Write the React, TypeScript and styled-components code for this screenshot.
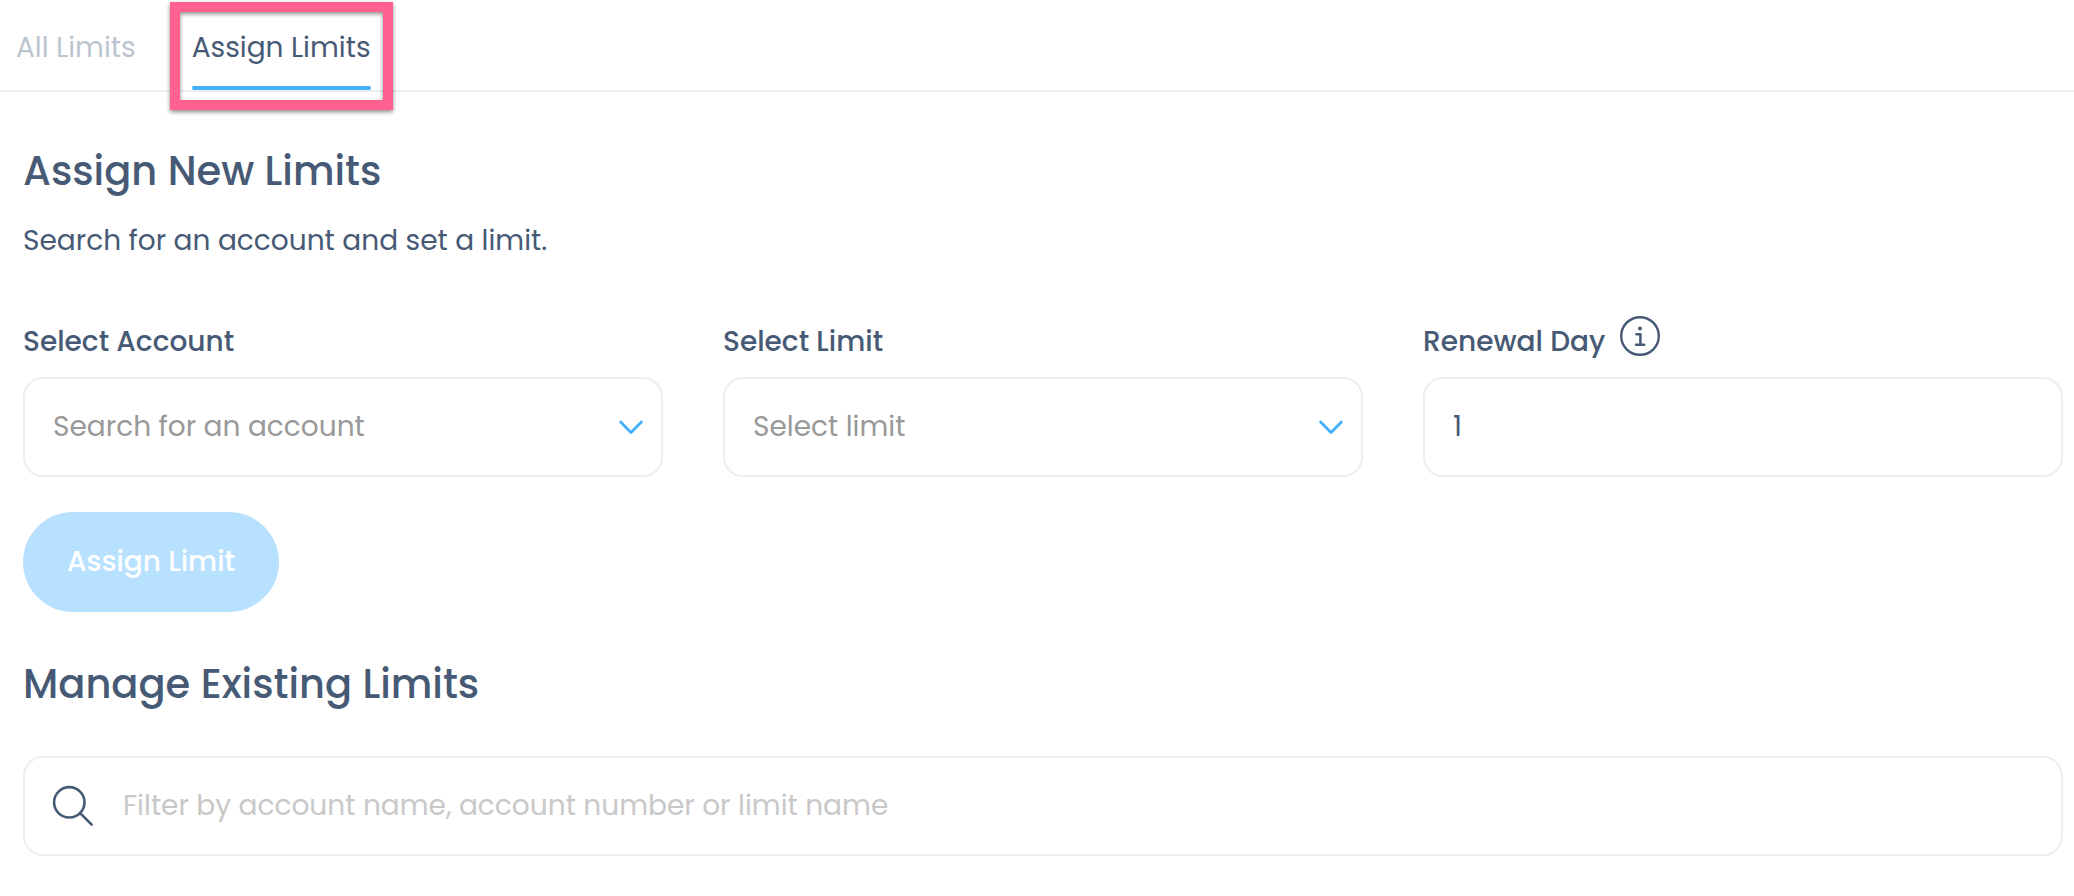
import React, { useState } from "react";
import styled, { createGlobalStyle } from "styled-components";

const ink = "#475a75";
const line = "#e9eff4";
const blue = "#42b0ff";

const GlobalStyle = createGlobalStyle`
  *, *::before, *::after { box-sizing: border-box; }
  body { margin: 0; background: #fff; }
  body, button, input, select {
    font-family: Poppins, Inter, "Liberation Sans", sans-serif;
    font-size: 28px;
    line-height: 42px;
    color: ${ink};
  }
`;

const TabBar = styled.nav`
  display: flex;
  align-items: stretch;
  gap: 56px;
  height: 92px;
  padding: 0 16px;
  border-bottom: 2px solid ${line};
`;

const Tab = styled.button<{ $active?: boolean }>`
  position: relative;
  padding: 25px 0 19px;
  border: 0;
  background: none;
  color: ${(p) => (p.$active ? ink : "#bcc5cf")};
  cursor: pointer;
`;

const Underline = styled.span`
  position: absolute;
  left: 0;
  right: 0;
  bottom: 0;
  height: 4px;
  border-radius: 2px;
  background: ${blue};
`;

const Highlight = styled.span`
  position: absolute;
  inset: 2px -22px -20px;
  border: 10px solid #ff6190;
  filter: drop-shadow(0 2px 2px rgba(0, 0, 0, 0.45));
  pointer-events: none;
`;

const Main = styled.main`
  padding: 49px 11px 40px 23px;
`;

const Heading = styled.h2`
  margin: 0;
  font-size: 40px;
  font-weight: 500;
  line-height: 60px;
`;

const Intro = styled.p`
  margin: 19px 0 54px;
`;

const Fields = styled.div`
  display: grid;
  grid-template-columns: repeat(3, 1fr);
  gap: 60px;
`;

const LabelRow = styled.div`
  display: flex;
  align-items: flex-start;
  gap: 15px;
  height: 46px;
  margin-bottom: 15px;
`;

const Label = styled.label`
  padding-top: 5px;
  font-weight: 500;
`;

const InfoButton = styled.button`
  display: flex;
  padding: 0;
  border: 0;
  background: none;
`;

const Box = styled.div`
  position: relative;
  display: flex;
  align-items: center;
  height: 100px;
  border: 2px solid ${line};
  border-radius: 20px;
`;

const Select = styled.select`
  appearance: none;
  width: 100%;
  height: 100%;
  padding: 0 60px 0 28px;
  border: 0;
  border-radius: 18px;
  background: none;
  color: #999;
`;

const ChevronSlot = styled.span`
  position: absolute;
  right: 17px;
  display: flex;
  pointer-events: none;
`;

const Input = styled.input`
  flex: 1;
  min-width: 0;
  height: 100%;
  padding: 0 28px;
  border: 0;
  border-radius: 18px;
  background: none;
  &::placeholder { color: #c8c8c8; opacity: 1; }
`;

const SearchBox = styled(Box)`
  gap: 1px;
  margin-top: 42px;
  padding-left: 27px;
`;

const AssignButton = styled.button`
  display: block;
  height: 100px;
  min-width: 256px;
  margin: 35px 0 42px;
  padding: 0 44px;
  border: 0;
  border-radius: 50px;
  background: #b8e1ff;
  color: #fff;
  font-weight: 500;
`;

const Chevron = () => (
  <ChevronSlot>
    <svg width="26" height="16" viewBox="0 0 26 16" fill="none" aria-hidden="true">
      <path d="M2.6 3 13 13.4 23.4 3" stroke={blue} strokeWidth="2.8" strokeLinecap="round" strokeLinejoin="round" />
    </svg>
  </ChevronSlot>
);

const InfoIcon = () => (
  <svg width="40" height="40" viewBox="0 0 40 40" fill="none" stroke={ink} aria-hidden="true">
    <circle cx="20" cy="20" r="18.8" strokeWidth="2.4" />
    <circle cx="20" cy="12.4" r="2" fill={ink} stroke="none" />
    <path d="M16.4 18.3H20.4V28.6M16 28.8H24.2" strokeWidth="2.5" strokeLinecap="round" strokeLinejoin="round" />
  </svg>
);

const SearchIcon = () => (
  <svg width="42" height="42" viewBox="0 0 42 42" fill="none" stroke={ink} strokeWidth="2.6" aria-hidden="true">
    <circle cx="17.3" cy="17.3" r="15.2" />
    <path d="M28 28 39.7 39.7" strokeLinecap="round" />
  </svg>
);

export default function App() {
  const [day, setDay] = useState("1");
  const [filter, setFilter] = useState("");
  return (
    <>
      <GlobalStyle />
      <TabBar>
        <Tab type="button">All Limits</Tab>
        <Tab type="button" $active aria-current="page">
          Assign Limits
          <Underline />
          <Highlight />
        </Tab>
      </TabBar>
      <Main>
        <Heading>Assign New Limits</Heading>
        <Intro>Search for an account and set a limit.</Intro>
        <Fields>
          <div>
            <LabelRow><Label htmlFor="account">Select Account</Label></LabelRow>
            <Box>
              <Select id="account"><option>Search for an account</option></Select>
              <Chevron />
            </Box>
          </div>
          <div>
            <LabelRow><Label htmlFor="limit">Select Limit</Label></LabelRow>
            <Box>
              <Select id="limit"><option>Select limit</option></Select>
              <Chevron />
            </Box>
          </div>
          <div>
            <LabelRow>
              <Label htmlFor="day">Renewal Day</Label>
              <InfoButton type="button" aria-label="About the renewal day"><InfoIcon /></InfoButton>
            </LabelRow>
            <Box>
              <Input id="day" value={day} onChange={(e) => setDay(e.target.value)} />
            </Box>
          </div>
        </Fields>
        <AssignButton type="button" disabled>Assign Limit</AssignButton>
        <Heading>Manage Existing Limits</Heading>
        <SearchBox>
          <SearchIcon />
          <Input
            type="text"
            aria-label="Filter limits"
            placeholder="Filter by account name, account number or limit name"
            value={filter}
            onChange={(e) => setFilter(e.target.value)}
          />
        </SearchBox>
      </Main>
    </>
  );
}
